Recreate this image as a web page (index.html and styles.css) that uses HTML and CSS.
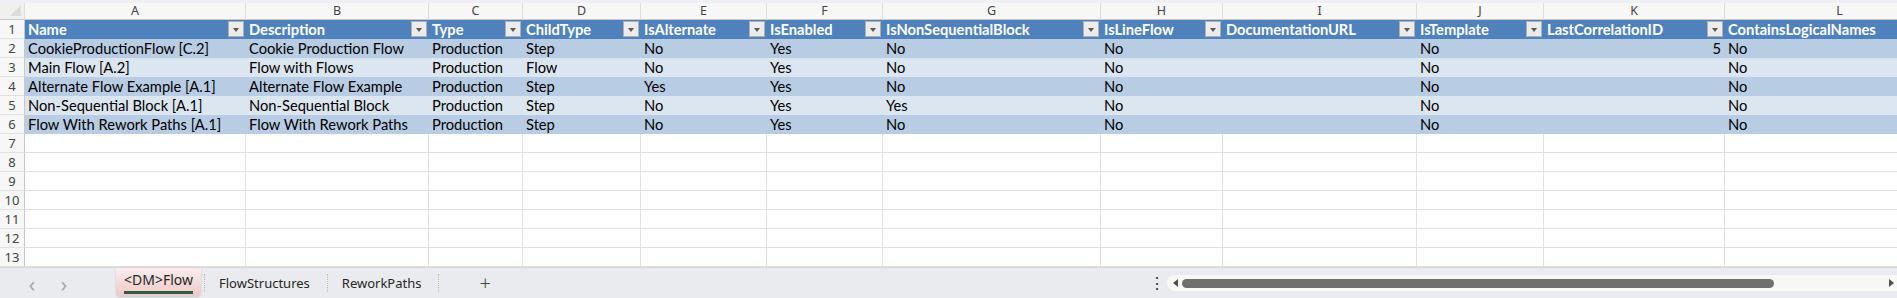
FILE: index.html
```html
<!DOCTYPE html>
<html lang="en">
<head>
    <meta charset="UTF-8">
    <title>&lt;DM&gt;Flow</title>
    <link rel="stylesheet" href="styles.css">
</head>
<body>

<div class="sheet">
    <table class="grid">
        <colgroup>
            <col style="width:25px">
            <col style="width:221px">
            <col style="width:183px">
            <col style="width:94px">
            <col style="width:118px">
            <col style="width:126px">
            <col style="width:116px">
            <col style="width:218px">
            <col style="width:122px">
            <col style="width:194px">
            <col style="width:127px">
            <col style="width:181px">
            <col style="width:230px">
        </colgroup>
        <thead>
            <tr class="letters">
                <th class="corner"><span class="corner-mark"></span></th>
                <th>A</th><th>B</th><th>C</th><th>D</th><th>E</th><th>F</th>
                <th>G</th><th>H</th><th>I</th><th>J</th><th>K</th><th>L</th>
            </tr>
        </thead>
        <tbody>
            <tr class="head">
                <td class="num">1</td>
                <td><div class="hcell"><span>Name</span><span class="filter"></span></div></td>
                <td><div class="hcell"><span>Description</span><span class="filter"></span></div></td>
                <td><div class="hcell"><span>Type</span><span class="filter"></span></div></td>
                <td><div class="hcell"><span>ChildType</span><span class="filter"></span></div></td>
                <td><div class="hcell"><span>IsAlternate</span><span class="filter"></span></div></td>
                <td><div class="hcell"><span>IsEnabled</span><span class="filter"></span></div></td>
                <td><div class="hcell"><span>IsNonSequentialBlock</span><span class="filter"></span></div></td>
                <td><div class="hcell"><span>IsLineFlow</span><span class="filter"></span></div></td>
                <td><div class="hcell"><span>DocumentationURL</span><span class="filter"></span></div></td>
                <td><div class="hcell"><span>IsTemplate</span><span class="filter"></span></div></td>
                <td><div class="hcell"><span>LastCorrelationID</span><span class="filter"></span></div></td>
                <td><div class="hcell"><span>ContainsLogicalNames</span><span class="filter"></span></div></td>
            </tr>
            <tr class="band1">
                <td class="num">2</td>
                <td>CookieProductionFlow [C.2]</td><td>Cookie Production Flow</td><td>Production</td><td>Step</td>
                <td>No</td><td>Yes</td><td>No</td><td>No</td><td></td><td>No</td><td class="right">5</td><td>No</td>
            </tr>
            <tr class="band2">
                <td class="num">3</td>
                <td>Main Flow [A.2]</td><td>Flow with Flows</td><td>Production</td><td>Flow</td>
                <td>No</td><td>Yes</td><td>No</td><td>No</td><td></td><td>No</td><td></td><td>No</td>
            </tr>
            <tr class="band1">
                <td class="num">4</td>
                <td>Alternate Flow Example [A.1]</td><td>Alternate Flow Example</td><td>Production</td><td>Step</td>
                <td>Yes</td><td>Yes</td><td>No</td><td>No</td><td></td><td>No</td><td></td><td>No</td>
            </tr>
            <tr class="band2">
                <td class="num">5</td>
                <td>Non-Sequential Block [A.1]</td><td>Non-Sequential Block</td><td>Production</td><td>Step</td>
                <td>No</td><td>Yes</td><td>Yes</td><td>No</td><td></td><td>No</td><td></td><td>No</td>
            </tr>
            <tr class="band1">
                <td class="num">6</td>
                <td>Flow With Rework Paths [A.1]</td><td>Flow With Rework Paths</td><td>Production</td><td>Step</td>
                <td>No</td><td>Yes</td><td>No</td><td>No</td><td></td><td>No</td><td></td><td>No</td>
            </tr>
            <tr class="empty"><td class="num">7</td><td></td><td></td><td></td><td></td><td></td><td></td><td></td><td></td><td></td><td></td><td></td><td></td></tr>
            <tr class="empty"><td class="num">8</td><td></td><td></td><td></td><td></td><td></td><td></td><td></td><td></td><td></td><td></td><td></td><td></td></tr>
            <tr class="empty"><td class="num">9</td><td></td><td></td><td></td><td></td><td></td><td></td><td></td><td></td><td></td><td></td><td></td><td></td></tr>
            <tr class="empty"><td class="num">10</td><td></td><td></td><td></td><td></td><td></td><td></td><td></td><td></td><td></td><td></td><td></td><td></td></tr>
            <tr class="empty"><td class="num">11</td><td></td><td></td><td></td><td></td><td></td><td></td><td></td><td></td><td></td><td></td><td></td><td></td></tr>
            <tr class="empty"><td class="num">12</td><td></td><td></td><td></td><td></td><td></td><td></td><td></td><td></td><td></td><td></td><td></td><td></td></tr>
            <tr class="empty"><td class="num">13</td><td></td><td></td><td></td><td></td><td></td><td></td><td></td><td></td><td></td><td></td><td></td><td></td></tr>
        </tbody>
    </table>
</div>

<div class="tabbar">
    <div class="nav">
        <span class="arrow">&#x2039;</span>
        <span class="arrow">&#x203A;</span>
    </div>
    <div class="tab active"><span>&lt;DM&gt;Flow</span></div>
    <span class="sep"></span>
    <div class="tab">FlowStructures</div>
    <span class="sep"></span>
    <div class="tab">ReworkPaths</div>
    <span class="sep"></span>
    <div class="add">+</div>
    <div class="spacer"></div>
    <div class="dots">&#x22EE;</div>
    <div class="hscroll">
        <span class="tri tri-left"></span>
        <span class="thumb"></span>
        <span class="tri tri-right"></span>
    </div>
</div>

</body>
</html>
```

FILE: styles.css
```css
body {
    margin: 0;
    width: 1897px;
    height: 298px;
    overflow: hidden;
    background: #ffffff;
    font-family: Lato, "Liberation Sans", sans-serif;
}
.sheet {
    height: 267px;
    overflow: hidden;
    background: #eef0f3;
    padding-top: 3px;
    box-sizing: border-box;
}
.grid {
    table-layout: fixed;
    border-collapse: separate;
    border-spacing: 0;
    width: 1955px;
    font-size: 14.7px;
    color: #000;
}
.grid td,
.grid th {
    padding: 0 3px;
    height: 18px;
    line-height: 18px;
    white-space: nowrap;
    overflow: hidden;
    border-right: 1px solid #e1e1e1;
    border-bottom: 1px solid #e1e1e1;
    background: #ffffff;
    box-sizing: border-box;
}
.letters th {
    height: 17px;
    line-height: 16px;
    font-family: "Noto Sans", "Open Sans", sans-serif;
    font-weight: normal;
    font-size: 12.5px;
    color: #444;
    background: #f7f7f7;
    border-right: 1px solid #dedede;
    border-bottom: 1px solid #c9c9c9;
    text-align: center;
}
.letters th.corner {
    position: relative;
    background: #f0f0f0;
}
.corner-mark {
    position: absolute;
    right: 3px;
    bottom: 3px;
    width: 0;
    height: 0;
    border-left: 11px solid transparent;
    border-bottom: 11px solid #dcdcdc;
}
.grid td.num {
    padding: 0;
    text-align: center;
    font-family: "Noto Sans", "Open Sans", sans-serif;
    font-size: 13px;
    font-weight: normal;
    color: #444;
    background: #f7f7f7;
    border-right: 1px solid #c9c9c9;
    border-bottom: 1px solid #e1e1e1;
}
.head td {
    background: #4f81bd;
    border-right-color: #4f81bd;
    border-bottom-color: #4f81bd;
    color: #fff;
    font-weight: bold;
    padding-right: 1px;
}
.hcell {
    display: flex;
    align-items: center;
    justify-content: space-between;
}
.filter {
    position: relative;
    width: 14px;
    height: 14px;
    flex: none;
    background: #ececec;
    border: 1px solid #b0b0b0;
}
.filter::after {
    content: "";
    position: absolute;
    left: 4px;
    top: 6px;
    border-left: 3px solid transparent;
    border-right: 3px solid transparent;
    border-top: 4px solid #5a5a5a;
}
.band1 td {
    background: #b8cce4;
    border-right-color: #b8cce4;
    border-bottom-color: #b8cce4;
}
.band2 td {
    background: #dce6f1;
    border-right-color: #dce6f1;
    border-bottom-color: #dce6f1;
}
.band1 td.num,
.band2 td.num {
    background: #f7f7f7;
    border-right-color: #c9c9c9;
    border-bottom-color: #e1e1e1;
}
.right {
    text-align: right;
}

/* sheet tabs + scrollbar */
.tabbar {
    height: 31px;
    display: flex;
    align-items: center;
    background: #e9ebee;
    border-top: 1px solid #d6d6d6;
    box-sizing: border-box;
    font-family: "Noto Sans", "Open Sans", sans-serif;
    font-size: 13px;
    color: #262626;
}
.nav {
    width: 116px;
    display: flex;
    gap: 20px;
    padding-left: 26px;
    box-sizing: border-box;
}
.arrow {
    width: 12px;
    text-align: center;
    font-size: 22px;
    line-height: 20px;
    color: #a8a8a8;
}
.tab {
    padding: 0 14px;
    line-height: 24px;
}
.tab.active {
    align-self: flex-start;
    height: 28px;
    padding: 0 8px;
    box-sizing: border-box;
    border-radius: 0 0 4px 4px;
    background: linear-gradient(#fbeeee, #efc8c8);
    box-shadow: 0 1px 2px rgba(0, 0, 0, 0.15);
    font-size: 14px;
}
.tab.active span {
    display: inline-block;
    line-height: 22px;
    border-bottom: 3px solid #2f5d3f;
}
.sep {
    width: 0;
    height: 18px;
    border-left: 1px dotted #b9c2b0;
    margin: 0 0 0 3px;
}
.add {
    margin-left: 40px;
    font-size: 20px;
    font-weight: 300;
    color: #3c4c3c;
    line-height: 20px;
}
.spacer {
    flex: 1;
}
.dots {
    width: 18px;
    font-size: 16px;
    color: #333;
    line-height: 16px;
}
.hscroll {
    width: 730px;
    height: 16px;
    display: flex;
    align-items: center;
    background: #f7f7f7;
    border-radius: 8px 0 0 8px;
    padding: 0 3px 0 6px;
    box-sizing: border-box;
}
.thumb {
    width: 592px;
    height: 9px;
    margin-left: 4px;
    border-radius: 5px;
    background: #707070;
}
.tri {
    width: 0;
    height: 0;
    border-top: 4px solid transparent;
    border-bottom: 4px solid transparent;
}
.tri-left {
    border-right: 5px solid #505050;
}
.tri-right {
    margin-left: auto;
    border-left: 5px solid #505050;
}
```
